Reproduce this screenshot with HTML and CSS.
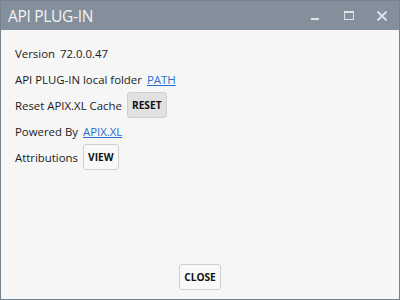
FILE: index.html
```html
<!DOCTYPE html>
<html>
<head>
<meta charset="utf-8">
<link rel="stylesheet" href="styles.css">
</head>
<body>
<div class="window">
  <div class="titlebar">
    <span class="title">API PLUG-IN</span>
    <div class="controls">
      <span class="ctl"><svg width="12" height="12" viewBox="0 0 12 12"><rect x="1" y="8" width="8" height="2" fill="#dde2e7"/></svg></span>
      <span class="ctl"><svg width="12" height="12" viewBox="0 0 12 12"><rect x="1.5" y="1.5" width="9" height="8" fill="none" stroke="#dde2e7" stroke-width="1"/><rect x="1" y="1" width="10" height="2" fill="#dde2e7"/></svg></span>
      <span class="ctl"><svg width="12" height="12" viewBox="0 0 12 12"><path d="M1.5 1.5 L10.5 10.5 M10.5 1.5 L1.5 10.5" stroke="#dde2e7" stroke-width="2"/></svg></span>
    </div>
  </div>
  <div class="content">
    <div class="rows">
      <div class="row"><span>Version</span><span>72.0.0.47</span></div>
      <div class="row"><span>API PLUG-IN local folder</span><a class="link" href="#">PATH</a></div>
      <div class="row"><span>Reset APIX.XL Cache</span><button class="btn btn-gray">RESET</button></div>
      <div class="row"><span>Powered By</span><a class="link" href="#">APIX.XL</a></div>
      <div class="row"><span>Attributions</span><button class="btn">VIEW</button></div>
    </div>
    <div class="footer"><button class="btn">CLOSE</button></div>
  </div>
</div>
</body>
</html>
```
FILE: styles.css
```css
html, body { margin: 0; padding: 0; }
body { width: 400px; height: 300px; overflow: hidden; font-family: "Open Sans", "Noto Sans", sans-serif; }
.window {
  box-sizing: border-box;
  width: 400px; height: 300px;
  border: 1px solid #75838f;
  display: flex; flex-direction: column;
  background: #f6f6f6;
}
.titlebar {
  height: 29px;
  background: #838f9b;
  display: flex; align-items: center; justify-content: space-between;
  flex-shrink: 0;
}
.title {
  color: #f2f4f6;
  font-size: 15.5px;
  padding-left: 7px;
  letter-spacing: -0.3px;
}
.controls { display: flex; gap: 21px; padding-right: 11px; }
.ctl { display: flex; width: 12px; height: 12px; }
.content {
  flex: 1;
  display: flex; flex-direction: column; justify-content: space-between;
  padding: 10px 14px 9px;
}
.rows { display: flex; flex-direction: column; }
.row {
  height: 26px;
  display: flex; align-items: center; gap: 5px;
  font-size: 11.4px; color: #1a1a1a;
}
.link { color: #2a6fd0; text-decoration: underline; }
.btn {
  font-family: "Open Sans", sans-serif;
  font-weight: 700;
  font-size: 10.2px;
  color: #111;
  background: #f9f9f9;
  border: 1px solid #cfcfcf;
  border-radius: 3px;
  height: 26px;
  padding: 0 4px;
  margin: 0;
}
.btn-gray { background: #e1e1e1; }
.footer { display: flex; justify-content: center; }
```
